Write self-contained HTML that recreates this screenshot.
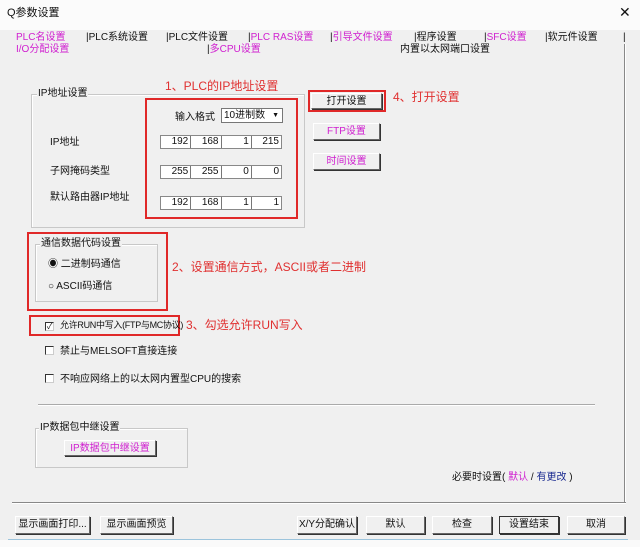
<!DOCTYPE html>
<html><head><meta charset="utf-8"><style>
*{margin:0;padding:0;box-sizing:border-box}
body{width:640px;height:547px;background:#f0f0f0;position:relative;overflow:hidden;font-family:"Liberation Sans","Noto Sans CJK SC",sans-serif;font-size:10px;color:#111}
.a{position:absolute;white-space:nowrap;line-height:12px}
.m{color:#d020d0}
.r{color:#e03030;font-size:12px;line-height:14px}
.red{position:absolute;border:2px solid #e02828}
.grp{position:absolute;border:1px solid #c8c8c8;box-shadow:inset 1px 1px 0 #fff}
.lbl{position:absolute;background:#f0f0f0;padding:0 1px;line-height:12px;white-space:nowrap}
.btn{position:absolute;border:1px solid #fff;border-right-color:#666;border-bottom-color:#666;box-shadow:1px 1px 0 #333;text-align:center;line-height:16px;background:#f0f0f0}
.ip{position:absolute;width:122px;height:14px;border:1px solid #888;background:#fff;display:flex}
.ip span{flex:1;text-align:right;padding-right:2px;border-right:1px solid #777;line-height:12px}
.ip span:last-child{border-right:none}
.cb{display:inline-block;width:9px;height:9px;border:1px solid #333;border-right-color:#ccc;border-bottom-color:#ccc;margin-right:6px;vertical-align:-1px;background:#fff;font-size:8px;line-height:7px;text-align:center}
</style></head><body>
<div class="a" style="left:0;top:0;width:640px;height:30px;background:#fbfbfb"></div>
<div class="a" style="left:7px;top:7px;font-size:11px">Q参数设置</div>
<div class="a" style="left:619px;top:6px;font-size:14px">✕</div>

<div class="a m" style="left:16px;top:32px">PLC名设置</div>
<div class="a" style="left:86px;top:32px">|PLC系统设置</div>
<div class="a" style="left:166px;top:32px">|PLC文件设置</div>
<div class="a m" style="left:248px;top:32px"><span style="color:#111">|</span>PLC RAS设置</div>
<div class="a m" style="left:330px;top:32px"><span style="color:#111">|</span>引导文件设置</div>
<div class="a" style="left:414px;top:32px">|程序设置</div>
<div class="a m" style="left:484px;top:32px"><span style="color:#111">|</span>SFC设置</div>
<div class="a" style="left:545px;top:32px">|软元件设置</div>
<div class="a" style="left:623px;top:32px">|</div>
<div class="a m" style="left:16px;top:44px">I/O分配设置</div>
<div class="a m" style="left:207px;top:44px"><span style="color:#111">|</span>多CPU设置</div>
<div class="a" style="left:400px;top:44px">内置以太网端口设置</div>

<div class="a" style="left:624px;top:44px;width:2px;height:460px;border-left:1px solid #888;border-right:1px solid #fff"></div>
<div class="a" style="left:12px;top:502px;width:614px;height:2px;border-top:1px solid #888;border-bottom:1px solid #fff"></div>

<div class="grp" style="left:31px;top:94px;width:274px;height:134px"></div>
<div class="lbl" style="left:37px;top:88px">IP地址设置</div>
<div class="a r" style="left:165px;top:79px">1、PLC的IP地址设置</div>
<div class="red" style="left:145px;top:98px;width:153px;height:121px"></div>
<div class="a" style="left:175px;top:112px">输入格式</div>
<div class="a" style="left:221px;top:108px;width:62px;height:15px;border:1px solid #777;background:#fff;padding-left:2px;line-height:13px">10进制数<span style="position:absolute;right:3px;font-size:7px">▼</span></div>
<div class="a" style="left:50px;top:137px">IP地址</div>
<div class="ip" style="left:160px;top:135px"><span>192</span><span>168</span><span>1</span><span>215</span></div>
<div class="a" style="left:50px;top:166px">子网掩码类型</div>
<div class="ip" style="left:160px;top:165px"><span>255</span><span>255</span><span>0</span><span>0</span></div>
<div class="a" style="left:50px;top:192px">默认路由器IP地址</div>
<div class="ip" style="left:160px;top:196px"><span>192</span><span>168</span><span>1</span><span>1</span></div>

<div class="red" style="left:308px;top:90px;width:78px;height:22px"></div>
<div class="btn" style="left:311px;top:93px;width:71px;height:16px">打开设置</div>
<div class="a r" style="left:393px;top:90px">4、打开设置</div>
<div class="btn m" style="left:313px;top:123px;width:67px;height:17px">FTP设置</div>
<div class="btn m" style="left:313px;top:153px;width:67px;height:17px">时间设置</div>

<div class="red" style="left:27px;top:232px;width:141px;height:79px"></div>
<div class="grp" style="left:35px;top:244px;width:123px;height:58px"></div>
<div class="lbl" style="left:40px;top:238px">通信数据代码设置</div>
<div class="a" style="left:48px;top:259px">◉ 二进制码通信</div>
<div class="a" style="left:48px;top:281px">○ ASCII码通信</div>
<div class="a r" style="left:172px;top:260px">2、设置通信方式，ASCII或者二进制</div>

<div class="red" style="left:29px;top:315px;width:151px;height:21px"></div>
<div class="a" style="left:45px;top:319px;font-size:9px;letter-spacing:-0.3px"><span class="cb">✓</span>允许RUN中写入(FTP与MC协议)</div>
<div class="a r" style="left:186px;top:318px">3、勾选允许RUN写入</div>
<div class="a" style="left:45px;top:346px"><span class="cb"></span>禁止与MELSOFT直接连接</div>
<div class="a" style="left:45px;top:374px"><span class="cb"></span>不响应网络上的以太网内置型CPU的搜索</div>

<div class="a" style="left:38px;top:404px;width:557px;height:2px;border-top:1px solid #aaa;border-bottom:1px solid #fff"></div>

<div class="grp" style="left:35px;top:428px;width:153px;height:40px"></div>
<div class="lbl" style="left:39px;top:422px">IP数据包中继设置</div>
<div class="btn m" style="left:64px;top:440px;width:92px;height:16px">IP数据包中继设置</div>

<div class="a" style="left:452px;top:472px">必要时设置( <span class="m">默认</span> / <span style="color:#1a2a90">有更改</span> )</div>

<div class="btn" style="left:15px;top:516px;width:75px;height:18px">显示画面打印...</div>
<div class="btn" style="left:100px;top:516px;width:73px;height:18px">显示画面预览</div>
<div class="btn" style="left:297px;top:516px;width:60px;height:18px">X/Y分配确认</div>
<div class="btn" style="left:366px;top:516px;width:59px;height:18px">默认</div>
<div class="btn" style="left:432px;top:516px;width:60px;height:18px">检查</div>
<div class="btn" style="left:499px;top:516px;width:60px;height:18px;border:1px solid #333">设置结束</div>
<div class="btn" style="left:567px;top:516px;width:58px;height:18px">取消</div>
<div class="a" style="left:8px;top:539px;width:620px;height:1px;background:#9cc4dc"></div>
<div class="a" style="left:0;top:540px;width:640px;height:7px;background:#fafafa"></div>
</body></html>
